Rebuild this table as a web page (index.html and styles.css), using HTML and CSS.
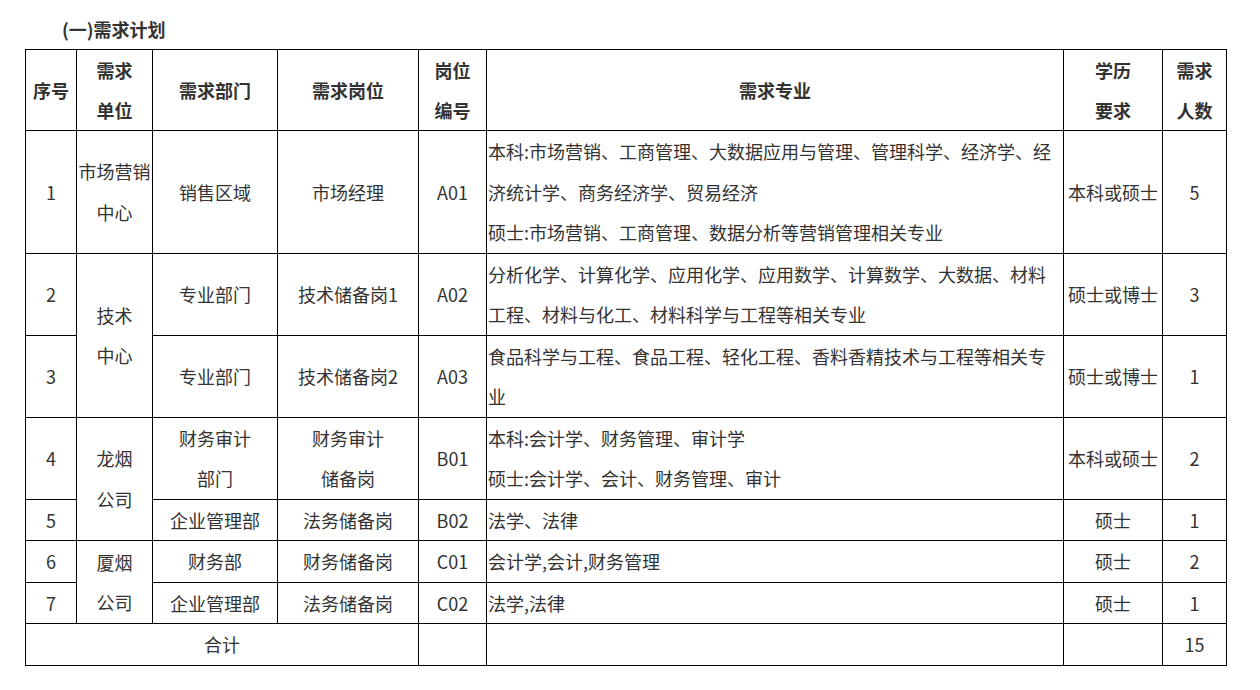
FILE: index.html
```html
<!DOCTYPE html>
<html lang="zh-CN">
<head>
<meta charset="utf-8">
<title>需求计划</title>
<link rel="stylesheet" href="styles.css">
</head>
<body>
<div class="page">
  <h3 class="title">(一)需求计划</h3>
  <table class="plan">
    <colgroup>
      <col class="c1"><col class="c2"><col class="c3"><col class="c4">
      <col class="c5"><col class="c6"><col class="c7"><col class="c8">
    </colgroup>
    <thead>
      <tr>
        <th>序号</th>
        <th>需求<br>单位</th>
        <th>需求部门</th>
        <th>需求岗位</th>
        <th>岗位<br>编号</th>
        <th>需求专业</th>
        <th>学历<br>要求</th>
        <th>需求<br>人数</th>
      </tr>
    </thead>
    <tbody>
      <tr>
        <td>1</td>
        <td>市场营销<br>中心</td>
        <td>销售区域</td>
        <td>市场经理</td>
        <td>A01</td>
        <td class="major">本科:市场营销、工商管理、大数据应用与管理、管理科学、经济学、经<br>济统计学、商务经济学、贸易经济<br>硕士:市场营销、工商管理、数据分析等营销管理相关专业</td>
        <td>本科或硕士</td>
        <td>5</td>
      </tr>
      <tr>
        <td>2</td>
        <td rowspan="2">技术<br>中心</td>
        <td>专业部门</td>
        <td>技术储备岗1</td>
        <td>A02</td>
        <td class="major">分析化学、计算化学、应用化学、应用数学、计算数学、大数据、材料<br>工程、材料与化工、材料科学与工程等相关专业</td>
        <td>硕士或博士</td>
        <td>3</td>
      </tr>
      <tr>
        <td>3</td>
        <td>专业部门</td>
        <td>技术储备岗2</td>
        <td>A03</td>
        <td class="major">食品科学与工程、食品工程、轻化工程、香料香精技术与工程等相关专<br>业</td>
        <td>硕士或博士</td>
        <td>1</td>
      </tr>
      <tr>
        <td>4</td>
        <td rowspan="2">龙烟<br>公司</td>
        <td>财务审计<br>部门</td>
        <td>财务审计<br>储备岗</td>
        <td>B01</td>
        <td class="major">本科:会计学、财务管理、审计学<br>硕士:会计学、会计、财务管理、审计</td>
        <td>本科或硕士</td>
        <td>2</td>
      </tr>
      <tr>
        <td>5</td>
        <td>企业管理部</td>
        <td>法务储备岗</td>
        <td>B02</td>
        <td class="major">法学、法律</td>
        <td>硕士</td>
        <td>1</td>
      </tr>
      <tr>
        <td>6</td>
        <td rowspan="2">厦烟<br>公司</td>
        <td>财务部</td>
        <td>财务储备岗</td>
        <td>C01</td>
        <td class="major">会计学,会计,财务管理</td>
        <td>硕士</td>
        <td>2</td>
      </tr>
      <tr>
        <td>7</td>
        <td>企业管理部</td>
        <td>法务储备岗</td>
        <td>C02</td>
        <td class="major">法学,法律</td>
        <td>硕士</td>
        <td>1</td>
      </tr>
      <tr>
        <td colspan="4">合计</td>
        <td></td>
        <td class="major"></td>
        <td></td>
        <td>15</td>
      </tr>
    </tbody>
  </table>
</div>
</body>
</html>
```

FILE: styles.css
```css
html, body {
  margin: 0;
  padding: 0;
  background: #ffffff;
}

body {
  font-family: "Noto Sans CJK SC", "Noto Sans", sans-serif;
  color: #333333;
}

.page {
  padding: 9px 0 0 25px;
}

.title {
  margin: 0;
  padding-left: 37px;
  font-size: 18px;
  line-height: 40px;
  font-weight: bold;
  color: #333333;
}

.plan {
  border-collapse: collapse;
  table-layout: fixed;
  width: 1201px;
  font-size: 18px;
  line-height: 40.5px;
}

.plan thead {
  line-height: 40px;
}

.plan th,
.plan td {
  border: 1px solid #000000;
  padding: 0;
  text-align: center;
  vertical-align: middle;
  white-space: nowrap;
  overflow: hidden;
}

.plan th {
  font-weight: bold;
}

.plan td.major {
  text-align: left;
  padding-left: 1px;
}

.c1 { width: 51px; }
.c2 { width: 76px; }
.c3 { width: 125px; }
.c4 { width: 141px; }
.c5 { width: 68px; }
.c6 { width: 577px; }
.c7 { width: 99px; }
.c8 { width: 64px; }
```
